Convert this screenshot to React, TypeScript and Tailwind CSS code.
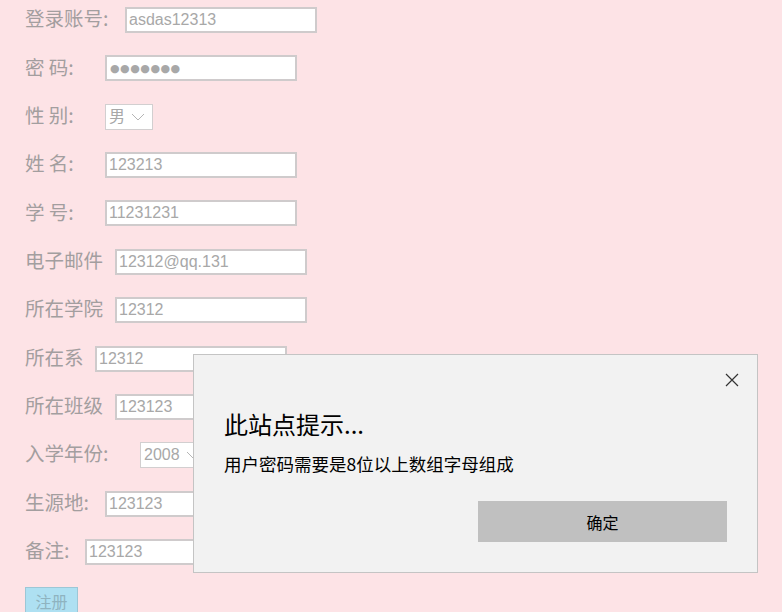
import { useState } from 'react'

type Row = {
  label: string
  labelWidth: string
  kind: 'text' | 'password' | 'select'
  value: string
  selectWidth?: string
}

const rows: Row[] = [
  { label: '登录账号:', labelWidth: 'w-[100px]', kind: 'text', value: 'asdas12313' },
  { label: '密 码:', labelWidth: 'w-[80px]', kind: 'password', value: '●●●●●●●' },
  { label: '性 别:', labelWidth: 'w-[80px]', kind: 'select', value: '男', selectWidth: 'w-[48px]' },
  { label: '姓 名:', labelWidth: 'w-[80px]', kind: 'text', value: '123213' },
  { label: '学 号:', labelWidth: 'w-[80px]', kind: 'text', value: '11231231' },
  { label: '电子邮件', labelWidth: 'w-[90px]', kind: 'text', value: '12312@qq.131' },
  { label: '所在学院', labelWidth: 'w-[90px]', kind: 'text', value: '12312' },
  { label: '所在系', labelWidth: 'w-[70px]', kind: 'text', value: '12312' },
  { label: '所在班级', labelWidth: 'w-[90px]', kind: 'text', value: '123123' },
  { label: '入学年份:', labelWidth: 'w-[115px]', kind: 'select', value: '2008', selectWidth: 'w-[70px]' },
  { label: '生源地:', labelWidth: 'w-[80px]', kind: 'text', value: '123123' },
  { label: '备注:', labelWidth: 'w-[60px]', kind: 'text', value: '123123' },
]

function Chevron() {
  return (
    <svg width="14" height="8" viewBox="0 0 14 8" className="ml-[6px]">
      <path d="M1 1 L7 7 L13 1" fill="none" stroke="#b5b5b5" strokeWidth="1" />
    </svg>
  )
}

function Field({ row }: { row: Row }) {
  if (row.kind === 'select') {
    return (
      <div
        className={`${row.selectWidth} h-[26px] flex items-center bg-white border border-[#d2cfd0] pl-[3px] text-[16px] text-[#a8a8a8] font-['Liberation_Sans','Noto_Sans_CJK_SC',sans-serif]`}
      >
        <span>{row.value}</span>
        <Chevron />
      </div>
    )
  }
  if (row.kind === 'password') {
    return (
      <input
        type="text"
        defaultValue={row.value}
        readOnly
        className="w-[192px] h-[26px] bg-white border-2 border-[#cfcbcc] px-[3px] text-[11px] tracking-[0.5px] text-[#a8a8a8] outline-none font-['DejaVu_Sans',sans-serif]"
      />
    )
  }
  return (
    <input
      type="text"
      defaultValue={row.value}
      readOnly
      className="w-[192px] h-[26px] bg-white border-2 border-[#cfcbcc] px-[2px] text-[16px] text-[#a8a8a8] outline-none font-['Liberation_Sans',sans-serif]"
    />
  )
}

export default function App() {
  const [open, setOpen] = useState(true)

  return (
    <div className="relative w-[782px] h-[612px] overflow-hidden bg-[#fde3e6] font-['Noto_Sans_CJK_SC',sans-serif]">
      <div className="flex flex-col gap-[22.36px] pl-[25px] pt-[7px]">
        {rows.map((row) => (
          <div key={row.label} className="flex items-center h-[26px]">
            <span className={`${row.labelWidth} shrink-0 -translate-y-[2px] text-[19.5px] leading-none text-[#a39e9f]`}>
              {row.label}
            </span>
            <Field row={row} />
          </div>
        ))}
        <div>
          <button className="w-[53px] h-[28px] bg-[#aee0f2] border border-[#9cc7d6] text-[16px] leading-none text-[#8fb3c0]">
            注册
          </button>
        </div>
      </div>

      {/* Alert dialog */}
      {open && (
        <div className="absolute left-[193px] top-[354px] w-[565px] h-[219px] bg-[#f2f2f2] border border-[#c4c4c4] font-['Noto_Sans_CJK_SC',sans-serif]">
          <button
            onClick={() => setOpen(false)}
            className="absolute right-[18px] top-[18px] w-[14px] h-[14px]"
          >
            <svg width="14" height="14" viewBox="0 0 14 14">
              <path d="M1 1 L13 13 M13 1 L1 13" stroke="#333" strokeWidth="1.2" />
            </svg>
          </button>
          <div className="pl-[30px] pt-[51px]">
            <div className="text-[24px] leading-[36px] text-black">此站点提示...</div>
            <div className="mt-[10px] text-[17.5px] leading-[24px] text-black">用户密码需要是8位以上数组字母组成</div>
          </div>
          <div className="absolute left-[284px] top-[146px] w-[249px] h-[41px] flex items-center justify-center bg-[#c0c0c0] text-[16px] text-black">
            确定
          </div>
        </div>
      )}
    </div>
  )
}
